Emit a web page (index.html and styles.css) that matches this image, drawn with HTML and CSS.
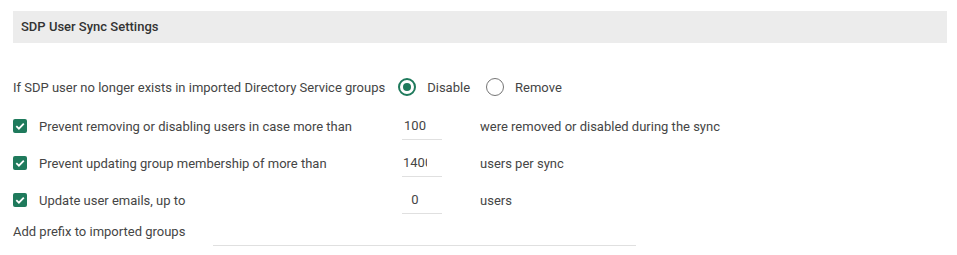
FILE: index.html
```html
<!DOCTYPE html>
<html lang="en">
<head>
  <meta charset="UTF-8">
  <title>SDP User Sync Settings</title>
  <link rel="stylesheet" href="styles.css">
</head>
<body>
  <div class="settings">
    <div class="section-title">SDP User Sync Settings</div>

    <div class="row row-radio">
      <span class="label">If SDP user no longer exists in imported Directory Service groups</span>
      <label class="radio checked"><span class="dot"></span>Disable</label>
      <label class="radio"><span class="dot"></span>Remove</label>
    </div>

    <div class="row row-check">
      <span class="check"><svg viewBox="0 0 14 14" width="14" height="14"><path d="M3.3 7.2 L5.9 9.7 L10.8 4.6" fill="none" stroke="#fff" stroke-width="1.8"/></svg></span>
      <span class="label">Prevent removing or disabling users in case more than</span>
      <input class="num" type="text" value="100">
      <span class="suffix">were removed or disabled during the sync</span>
    </div>

    <div class="row row-check">
      <span class="check"><svg viewBox="0 0 14 14" width="14" height="14"><path d="M3.3 7.2 L5.9 9.7 L10.8 4.6" fill="none" stroke="#fff" stroke-width="1.8"/></svg></span>
      <span class="label">Prevent updating group membership of more than</span>
      <input class="num" type="text" value="1400">
      <span class="suffix">users per sync</span>
    </div>

    <div class="row row-check">
      <span class="check"><svg viewBox="0 0 14 14" width="14" height="14"><path d="M3.3 7.2 L5.9 9.7 L10.8 4.6" fill="none" stroke="#fff" stroke-width="1.8"/></svg></span>
      <span class="label">Update user emails, up to</span>
      <input class="num" type="text" value="0">
      <span class="suffix">users</span>
    </div>

    <div class="row row-prefix">
      <span class="label">Add prefix to imported groups</span>
      <input class="text" type="text" value="">
    </div>
  </div>
</body>
</html>
```

FILE: styles.css
```css
* {
  margin: 0;
  padding: 0;
  box-sizing: border-box;
}

body {
  background-color: #fff;
  color: #454545;
  font-family: Roboto, 'Liberation Sans', sans-serif;
  font-size: 13px;
}

.settings {
  padding: 11px 10px 0 13px;
}

.section-title {
  height: 32px;
  line-height: 32px;
  padding-left: 8px;
  background-color: #ececec;
  font-weight: 500;
  color: #333;
}

.row {
  display: flex;
  align-items: center;
}

.row-radio {
  height: 26px;
  margin-top: 31px;
}

.row-radio .label {
  margin-right: 13px;
}

.radio {
  display: flex;
  align-items: center;
  margin-right: 16px;
}

.radio .dot {
  width: 18px;
  height: 18px;
  border: 1.5px solid #757575;
  border-radius: 50%;
  margin-right: 11px;
  position: relative;
}

.radio.checked .dot {
  border: 2px solid #1f7a5c;
}

.radio.checked .dot::after {
  content: '';
  position: absolute;
  left: 3px;
  top: 3px;
  width: 8px;
  height: 8px;
  border-radius: 50%;
  background-color: #1f7a5c;
}

.row-check {
  height: 36px;
}

.row-check:nth-of-type(3) {
  margin-top: 8px;
}

.row-check + .row-check {
  margin-top: 1px;
}

.check {
  width: 14px;
  height: 14px;
  border-radius: 2px;
  background-color: #1f7a5c;
  margin-right: 12px;
  display: flex;
}

.row-check .label {
  width: 363px;
}

.num {
  width: 40px;
  height: 28px;
  border: none;
  border-bottom: 1px solid #e0e0e0;
  padding: 0 15px 0 1px;
  text-align: center;
  font: inherit;
  color: #454545;
  outline: none;
}

.suffix {
  margin-left: 38px;
}

.row-prefix {
  height: 29px;
  margin-top: -1px;
}

.row-prefix .label {
  width: 200px;
}

.text {
  width: 423px;
  height: 29px;
  border: none;
  border-bottom: 1px solid #e0e0e0;
  font: inherit;
  outline: none;
}
```
